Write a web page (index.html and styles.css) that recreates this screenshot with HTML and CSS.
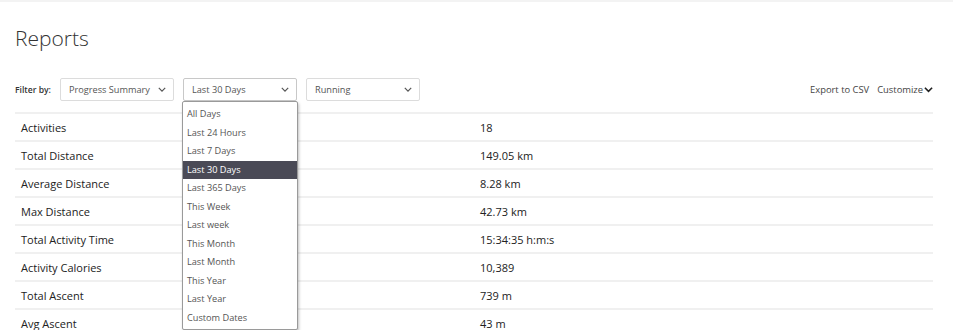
FILE: index.html
```
<!DOCTYPE html>
<html lang="en">
	<head>
		<meta charset="utf-8">
		<title>Reports</title>
		<meta name="viewport" content="width=device-width, initial-scale=1">
		<link rel="stylesheet" href="styles.css">
	</head>
	<body>
		<div class="page">
			<h1 class="page-title">Reports</h1>

			<!-- Filters -->
			<section class="filters">
				<span class="filter-label">Filter by:</span>
				<div class="select">
					<span>Progress Summary</span>
					<svg class="caret" viewBox="0 0 10 6"><path d="M1 1l4 4 4-4"/></svg>
				</div>
				<div class="select select-open">
					<span>Last 30 Days</span>
					<svg class="caret" viewBox="0 0 10 6"><path d="M1 1l4 4 4-4"/></svg>
					<ul class="dropdown">
						<li>All Days</li>
						<li>Last 24 Hours</li>
						<li>Last 7 Days</li>
						<li class="active">Last 30 Days</li>
						<li>Last 365 Days</li>
						<li>This Week</li>
						<li>Last week</li>
						<li>This Month</li>
						<li>Last Month</li>
						<li>This Year</li>
						<li>Last Year</li>
						<li>Custom Dates</li>
					</ul>
				</div>
				<div class="select">
					<span>Running</span>
					<svg class="caret" viewBox="0 0 10 6"><path d="M1 1l4 4 4-4"/></svg>
				</div>
				<div class="actions">
					<a class="action">Export to CSV</a>
					<a class="action">Customize<svg class="chevron" viewBox="0 0 10 7"><path d="M1 1.5l4 4 4-4"/></svg></a>
				</div>
			</section>

			<!-- Stats -->
			<section class="stats">
				<div class="stat"><span class="stat-name">Activities</span><span class="stat-value">18</span></div>
				<div class="stat"><span class="stat-name">Total Distance</span><span class="stat-value">149.05 km</span></div>
				<div class="stat"><span class="stat-name">Average Distance</span><span class="stat-value">8.28 km</span></div>
				<div class="stat"><span class="stat-name">Max Distance</span><span class="stat-value">42.73 km</span></div>
				<div class="stat"><span class="stat-name">Total Activity Time</span><span class="stat-value">15:34:35 h:m:s</span></div>
				<div class="stat"><span class="stat-name">Activity Calories</span><span class="stat-value">10,389</span></div>
				<div class="stat"><span class="stat-name">Total Ascent</span><span class="stat-value">739 m</span></div>
				<div class="stat"><span class="stat-name">Avg Ascent</span><span class="stat-value">43 m</span></div>
			</section>
		</div>
	</body>
</html>
```

FILE: styles.css
```
/* Reset */
*,
*::after,
*::before {
	margin: 0;
	padding: 0;
	box-sizing: border-box;
}

body {
	font-family: "Open Sans", "Liberation Sans", sans-serif;
	color: #222;
	background: #fff;
	overflow: hidden;
}

.page {
	border-top: 2px solid #f3f3f3;
	padding: 0 20px 0 15px;
}

.page-title {
	font-size: 21px;
	font-weight: 300;
	color: #333;
	margin-top: 22px;
	line-height: 29px;
}

/* Filters */
.filters {
	display: flex;
	align-items: center;
	margin-top: 25px;
	height: 23px;
}
.filter-label {
	font-size: 8.6px;
	font-weight: 600;
	color: #333;
	margin-right: 9px;
}
.select {
	position: relative;
	display: flex;
	align-items: center;
	justify-content: space-between;
	width: 114px;
	height: 23px;
	margin-right: 9px;
	padding: 0 7px 0 8px;
	border: 1px solid #dcdcdc;
	border-radius: 2px;
	font-size: 9.2px;
	color: #555;
}
.select-open {
	border-color: #c8c8c8;
}
.caret {
	width: 8px;
	height: 5px;
	fill: none;
	stroke: #555;
	stroke-width: 1.5;
}

.dropdown {
	position: absolute;
	top: 22px;
	left: -2px;
	width: 116px;
	padding: 3px 0 2px;
	list-style: none;
	background: #fff;
	border: 1px solid #9a9a9a;
	border-radius: 2px;
	box-shadow: 1px 2px 3px rgba(0, 0, 0, 0.25);
	z-index: 2;
}
.dropdown li {
	height: 18.5px;
	line-height: 18.5px;
	padding-left: 4px;
	font-size: 9.2px;
	color: #555;
}
.dropdown .active {
	background: #4a4a56;
	color: #fff;
}

.actions {
	display: flex;
	align-items: center;
	margin-left: auto;
	font-size: 9.4px;
	color: #444;
}
.action {
	display: flex;
	align-items: center;
	margin-left: 8px;
}
.chevron {
	width: 9px;
	height: 7px;
	margin-left: 1px;
	fill: none;
	stroke: #222;
	stroke-width: 1.8;
}

/* Stats */
.stats {
	margin-top: 11px;
	border-top: 2px solid #f0f0f0;
}
.stat {
	display: flex;
	align-items: center;
	height: 28px;
	border-bottom: 2px solid #f0f0f0;
	font-size: 11px;
	color: #222;
}
.stat-name {
	width: 465px;
	padding-left: 6px;
}
.stat-value {
	color: #222;
}
```
